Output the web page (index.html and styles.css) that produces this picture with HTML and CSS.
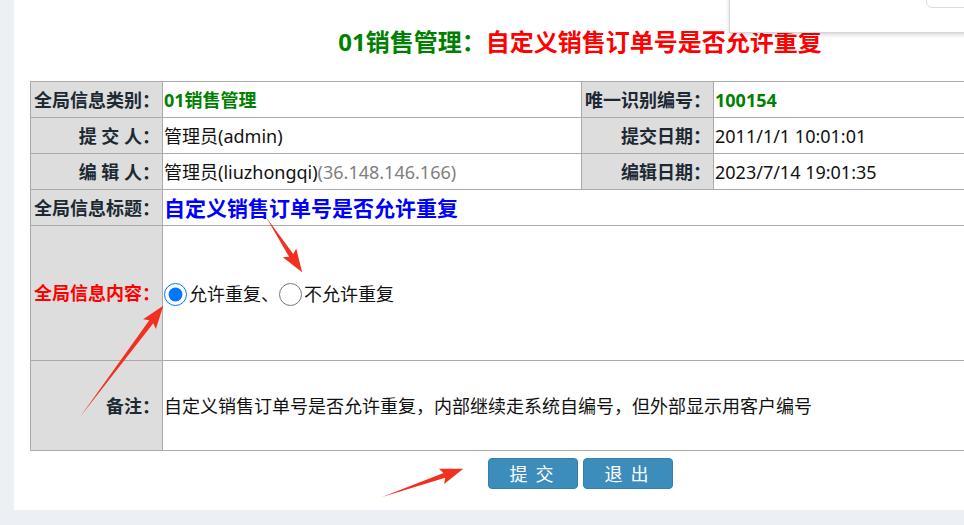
FILE: index.html
```html
<!DOCTYPE html>
<html lang="zh-CN">
<head>
    <meta charset="UTF-8">
    <meta name="viewport" content="width=device-width, initial-scale=1.0">
    <title>全局信息 - 自定义销售订单号是否允许重复</title>
    <link rel="stylesheet" href="styles.css">
</head>
<body>

<div class="content">
    <div class="box">
        <h2 class="page-title"><span class="cat">01销售管理：</span><span class="subject">自定义销售订单号是否允许重复</span></h2>

        <table class="info-table">
            <colgroup>
                <col class="col-label">
                <col class="col-value">
                <col class="col-label">
                <col>
            </colgroup>
            <tr>
                <td class="label">全局信息类别：</td>
                <td class="value green">01销售管理</td>
                <td class="label">唯一识别编号：</td>
                <td class="value green">100154</td>
            </tr>
            <tr>
                <td class="label">提 交 人：</td>
                <td class="value">管理员(admin)</td>
                <td class="label">提交日期：</td>
                <td class="value">2011/1/1 10:01:01</td>
            </tr>
            <tr>
                <td class="label">编 辑 人：</td>
                <td class="value">管理员(liuzhongqi)<span class="ip">(36.148.146.166)</span></td>
                <td class="label">编辑日期：</td>
                <td class="value">2023/7/14 19:01:35</td>
            </tr>
            <tr>
                <td class="label">全局信息标题：</td>
                <td class="value title-value" colspan="3">自定义销售订单号是否允许重复</td>
            </tr>
            <tr class="content-row">
                <td class="label red">全局信息内容：</td>
                <td class="value" colspan="3">
                    <label class="choice"><input type="radio" name="repeat" checked>允许重复、</label><label class="choice"><input type="radio" name="repeat">不允许重复</label>
                </td>
            </tr>
            <tr class="remark-row">
                <td class="label">备注：</td>
                <td class="value" colspan="3">自定义销售订单号是否允许重复，内部继续走系统自编号，但外部显示用客户编号</td>
            </tr>
        </table>

        <div class="actions">
            <button class="btn">提 交</button>
            <button class="btn">退 出</button>
        </div>
    </div>
</div>

<!-- floating panel cut off at the top right -->
<div class="popup"><div class="popup-pill"></div></div>

<!-- red annotation arrows -->
<svg class="marks" width="964" height="525" viewBox="0 0 964 525">
    <g fill="#f2301f">
        <polygon transform="translate(266 217) rotate(56.8)" points="0,0 46,-2.5 43,-8 66,0 43,8 46,2.5"/>
        <polygon transform="translate(80 417) rotate(-53.2)" points="0,0 119,-2.5 116,-8 139,0 116,8 119,2.5"/>
        <polygon transform="translate(382 497) rotate(-19.1)" points="0,0 66,-2.5 63,-8 86,0 63,8 66,2.5"/>
    </g>
</svg>

</body>
</html>
```

FILE: styles.css
```css
/* General styling */
html, body {
    overflow: hidden;
}

body {
    margin: 0;
    background-color: #ecf0f5;
    font-family: "Noto Sans", "Noto Sans CJK SC", sans-serif;
    color: #222;
}

.content {
    padding-left: 14px;
}

.box {
    width: 1100px;
    background: #fff;
    padding: 27px 16px 21px;
}

.page-title {
    margin: 0 0 24px;
    font-size: 24px;
    line-height: 30px;
    font-weight: bold;
    text-align: center;
}

.cat {
    color: #008000;
}

.subject {
    color: #ff0000;
}

/* Info table */
.info-table {
    width: 1100px;
    border-collapse: collapse;
    font-size: 18px;
    line-height: 24px;
    table-layout: fixed;
}

.col-label {
    width: 132px;
}

.col-value {
    width: 419px;
}

.info-table td {
    border: 1px solid #aaa;
    height: 35px;
    padding: 0;
    white-space: nowrap;
}

.label {
    background: #ddd;
    font-weight: bold;
    text-align: right;
    padding-right: 2px !important;
    color: #1c2933;
}

.value {
    padding-left: 1px !important;
    color: #111;
}

.green {
    color: #008000;
    font-weight: bold;
}

.red {
    color: #ff0000;
}

.ip {
    color: #808080;
}

.title-value {
    color: #0000ff;
    font-size: 21px;
    font-weight: bold;
}

.content-row td {
    height: 134px;
}

.remark-row td {
    height: 89px;
}

.choice {
    display: inline-flex;
    align-items: center;
    vertical-align: middle;
}

.choice input {
    width: 23px;
    height: 23px;
    margin: 0 2px 0 0;
}

/* Buttons */
.actions {
    display: flex;
    justify-content: center;
    gap: 5px;
    margin-top: 7px;
}

.btn {
    width: 90px;
    height: 31px;
    padding: 0;
    background-color: #3c8dbc;
    border: 1px solid #367fa9;
    border-radius: 4px;
    color: #fff;
    font-family: "Noto Sans CJK SC", sans-serif;
    font-size: 18px;
    line-height: 29px;
    letter-spacing: 2px;
    cursor: pointer;
}

/* Overlays */
.popup {
    position: absolute;
    top: -10px;
    left: 729px;
    width: 260px;
    height: 41px;
    background: #fff;
    border: 1px solid #d6d6d6;
    box-shadow: 0 2px 4px rgba(0, 0, 0, 0.15);
}

.popup-pill {
    position: absolute;
    top: -1px;
    left: 196px;
    width: 80px;
    height: 16px;
    border: 1px solid #ddd;
    border-radius: 6px;
}

.marks {
    position: absolute;
    top: 0;
    left: 0;
    pointer-events: none;
}
```
